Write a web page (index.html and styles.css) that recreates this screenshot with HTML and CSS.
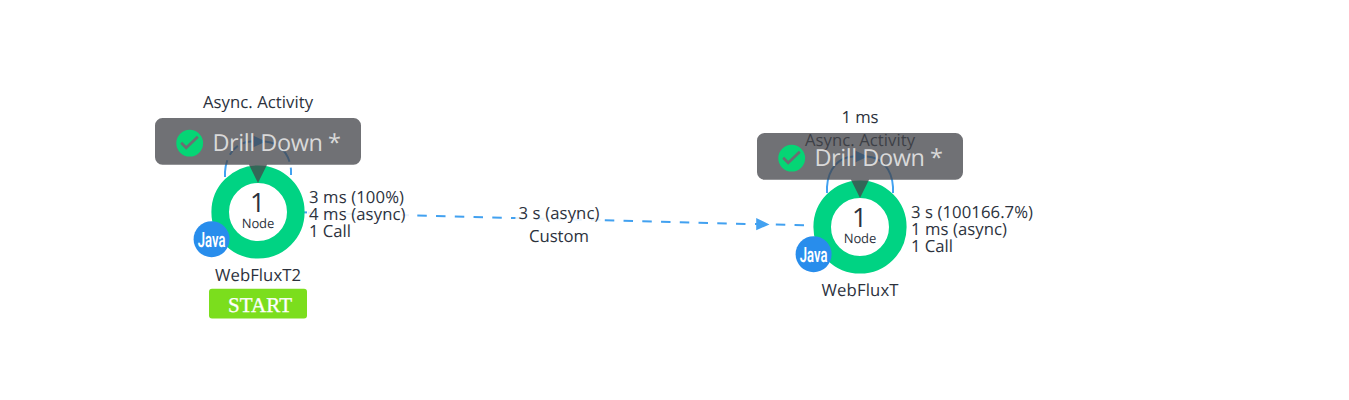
FILE: index.html
```
<!DOCTYPE html>
<html lang="en">
<head>
<meta charset="utf-8">
<title>Flow map</title>
<link rel="stylesheet" href="styles.css">
</head>
<body>
<svg class="flowmap" width="1349" height="400" viewBox="0 0 1349 400">
  <defs>
    <g id="node">
      <circle class="ring" r="37.800"/>
      <text class="count" x="-0.500" y="0">1</text>
      <text class="kind" x="0" y="16" textLength="32.500">Node</text>
      <circle class="java" cx="-46.400" cy="27.200" r="18"/>
      <text class="java-name" transform="translate(-46.400 34.500) scale(.6 1)" textLength="46" lengthAdjust="spacingAndGlyphs">Java</text>
    </g>
    <g id="drill">
      <path class="overlay" d="M-95.500 -94H95.500A7.500 7.500 0 0 1 103 -86.500V-54.700A7.500 7.500 0 0 1 95.500 -47.200H9L0 -29L-9 -47.200H-95.500A7.500 7.500 0 0 1 -103 -54.700V-86.500A7.500 7.500 0 0 1 -95.500 -94Z"/>
      <circle class="check-disc" cx="-68.300" cy="-68.800" r="13.400"/>
      <path class="check" d="M-76.800 -69.200L-71.800 -64.200L-60.200 -75.200"/>
      <text class="drill-text" x="-45.500" y="-61" textLength="128.500">Drill Down *</text>
    </g>
  </defs>

  <path class="edge faint" d="M308 212.800L409 215.300"/>
  <path class="edge" d="M304 212.400h3"/>
  <path class="edge dashed" d="M417.300 215.500L515.500 218"/>
  <path class="edge faint" d="M516 218L604 220.200"/>
  <path class="edge dashed" d="M604.800 220.200L745.500 223.900M775.800 224.600L804 225.300"/>
  <path class="arrow" d="M755 223.100L756.200 223V218L769.500 224.400L756.200 230.200V225L755 224.900Z"/>

  <g transform="translate(258 212)">
    <path class="edge dashed-loop" d="M-33 -35V-40C-32 -58 -21 -70 -7 -70.500H7C21 -70 32 -58 33 -42V-37"/>
    <path class="arrow" d="M-5 -76.500L8 -70.500L-5 -64.500Z"/>
    <use href="#node"/>
    <text class="label mid" x="0" y="-104" textLength="110">Async. Activity</text>
    <text class="label" x="51" y="-9" textLength="95">3 ms (100%)</text>
    <text class="label" x="51" y="8" textLength="96.500">4 ms (async)</text>
    <text class="label" x="51" y="25" textLength="42">1 Call</text>
    <text class="label mid" x="0" y="69" textLength="86">WebFluxT2</text>
    <rect class="start" x="-49" y="76.800" width="98" height="29.800" rx="3"/>
    <text class="start-text" x="2" y="100" textLength="64">START</text>
    <use href="#drill"/>
  </g>

  <text class="label mid" x="559" y="219" textLength="81">3 s (async)</text>
  <text class="label mid" x="559" y="242" textLength="60">Custom</text>

  <g transform="translate(860 227)">
    <path class="edge" d="M-33 -34V-40C-32 -58 -21 -70 -7 -70.500H7C21 -70 32 -58 33 -40V-34"/>
    <path class="arrow" d="M-5 -76.500L8 -70.500L-5 -64.500Z"/>
    <use href="#node"/>
    <text class="label mid" x="0" y="-104" textLength="37">1 ms</text>
    <text class="label mid" x="0" y="-81" textLength="110">Async. Activity</text>
    <text class="label" x="51" y="-9" textLength="122">3 s (100166.7%)</text>
    <text class="label" x="51" y="8" textLength="96">1 ms (async)</text>
    <text class="label" x="51" y="25" textLength="42">1 Call</text>
    <text class="label mid" x="0" y="69" textLength="77">WebFluxT</text>
    <use href="#drill"/>
  </g>
</svg>
</body>
</html>
```
FILE: styles.css
```
body { margin: 0; background: #fff; overflow: hidden; }
.flowmap { display: block; font-family: "Open Sans", "Noto Sans", sans-serif; text-rendering: geometricPrecision; }
.ring { fill: #fff; stroke: #00d383; stroke-width: 17.6px; }
.label, .count, .kind { fill: #2c323d; }
.label { font-size: 16.7px; }
.mid, .count, .kind, .java-name, .start-text { text-anchor: middle; }
.count { font-size: 26.5px; }
.kind { font-size: 13px; }
.java { fill: #288dec; }
.java-name { fill: #fff; font: 600 21px Roboto, sans-serif; }
.edge { fill: none; stroke: #42a1f0; stroke-width: 2; }
.dashed { stroke-dasharray: 9.500 9.250; }
.dashed-loop { stroke-dasharray: 17 6 12 5; }
.faint { stroke-dasharray: 9.500 9.250; opacity: .12; }
.arrow { fill: #42a1f0; }
.overlay { fill: #43444a; fill-opacity: .76; }
.check-disc { fill: #05d575; }
.check { fill: none; stroke: #6b6e72; stroke-width: 2.7; }
.drill-text { fill: #d9d9d9; font-size: 23.5px; }
.start { fill: #7bde1d; }
.start-text { fill: #fff; font: 21px "Liberation Serif", serif; stroke: #fff; stroke-width: .3; }
```
